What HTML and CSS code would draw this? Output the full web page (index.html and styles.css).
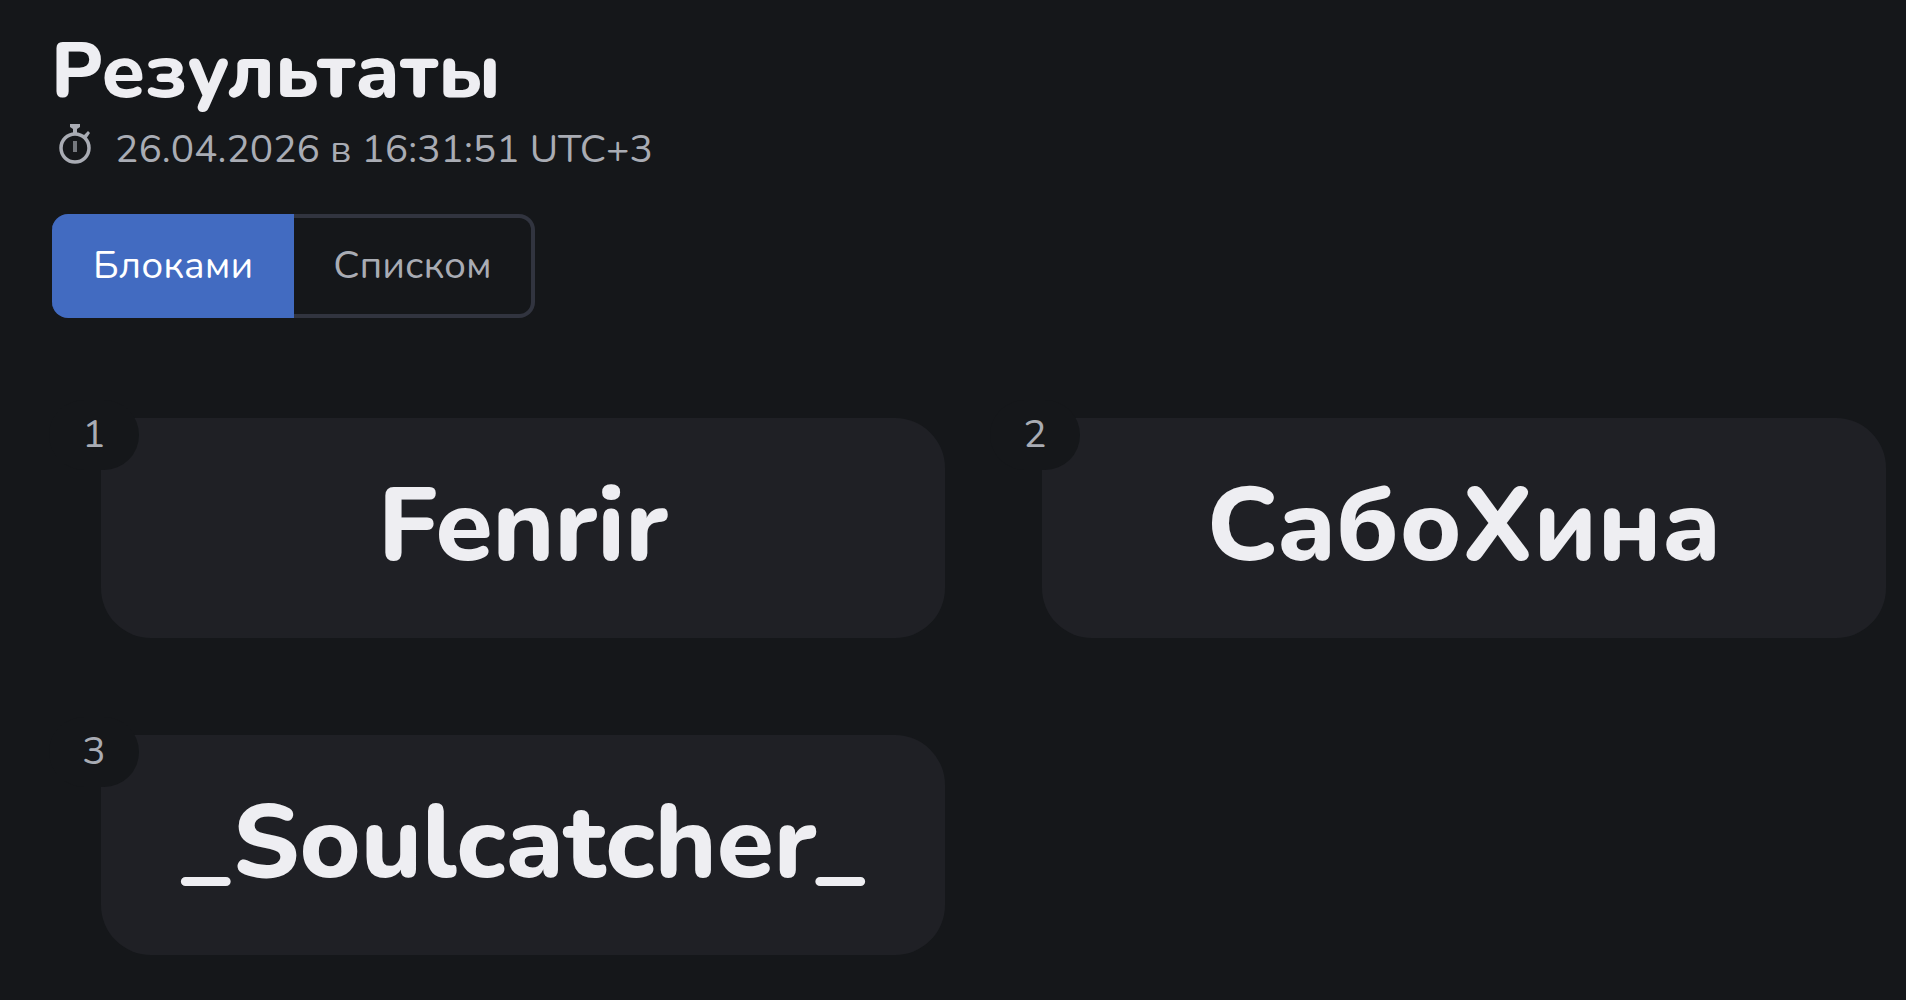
FILE: index.html
```html
<!DOCTYPE html>
<html lang="ru">
<head>
<meta charset="utf-8">
<meta name="viewport" content="width=device-width, initial-scale=1">
<title>Результаты</title>
<link rel="stylesheet" href="styles.css">
</head>
<body>
<main class="page">
  <header class="header">
    <h1 class="title">Результаты</h1>
    <p class="date">
      <svg class="date-icon" viewBox="0 1 32 42" aria-hidden="true">
        <circle cx="16" cy="25" r="14" fill="none" stroke="currentColor" stroke-width="3.5"/>
        <path d="M11 1h10v3l-3 2v5h-4V6l-3-2zM24 13l5-5 2 2-4 6z" fill="currentColor"/>
        <path d="M16 18v11" stroke="currentColor" stroke-width="4" opacity=".65"/>
      </svg>
      <time datetime="2026-04-26T16:31:51+03:00">26.04.2026 в 16:31:51 UTC+3</time>
    </p>
  </header>
  <div class="switch" role="group" aria-label="Вид">
    <button class="switch-button switch-button-active" type="button" aria-pressed="true">Блоками</button>
    <button class="switch-button" type="button" aria-pressed="false">Списком</button>
  </div>
  <ol class="results">
    <li class="card"><span class="place">1</span><span class="name">Fenrir</span></li>
    <li class="card"><span class="place">2</span><span class="name">СабоХина</span></li>
    <li class="card"><span class="place">3</span><span class="name">_Soulcatcher_</span></li>
  </ol>
</main>
</body>
</html>
```
FILE: styles.css
```css
* {
  box-sizing: border-box;
}

body {
  margin: 0;
  background: #15171a;
  color: #a9acb4;
  font: 400 39px/52px Nunito, "Noto Sans", sans-serif;
}

.page {
  padding: 32px 20px 40px 51px;
}

.title {
  margin: 0;
  color: #eeeef2;
  font-size: 78px;
  font-weight: 800;
  line-height: 80px;
}

.date {
  display: flex;
  align-items: center;
  gap: 24px;
  margin: 12px 0 0;
  padding-left: 8px;
}

.date-icon {
  width: 32px;
  height: 42px;
  margin-bottom: 10px;
}

.switch {
  display: flex;
  margin: 38px 0 0 1px;
}

.switch-button {
  height: 104px;
  padding: 0 43px 0 39px;
  border: 4px solid #31343f;
  border-width: 4px 0;
  border-radius: 0 16px 16px 0;
  background: transparent;
  color: inherit;
  font: inherit;
}

.switch-button:last-child {
  padding-right: 39px;
  border-right-width: 4px;
}

.switch-button-active {
  padding: 0 41px;
  border-color: #426bc1;
  border-radius: 16px 0 0 16px;
  background: #426bc1;
  color: #ffffff;
}

.results {
  display: grid;
  grid-template-columns: repeat(2, 1fr);
  gap: 97px;
  margin: 100px 0 0;
  padding: 0 0 0 50px;
  list-style: none;
}

.card {
  position: relative;
  display: flex;
  align-items: center;
  justify-content: center;
  height: 220px;
  padding-bottom: 4px;
  border-radius: 0 50px 50px 50px;
  background: #1f2025;
}

.place {
  position: absolute;
  top: -18px;
  left: -52px;
  width: 90px;
  height: 70px;
  border-radius: 35px;
  background: #15171a;
  line-height: 70px;
  text-align: center;
}

.name {
  color: #eeeef2;
  font-size: 104px;
  font-weight: 800;
  line-height: 140px;
}
```
